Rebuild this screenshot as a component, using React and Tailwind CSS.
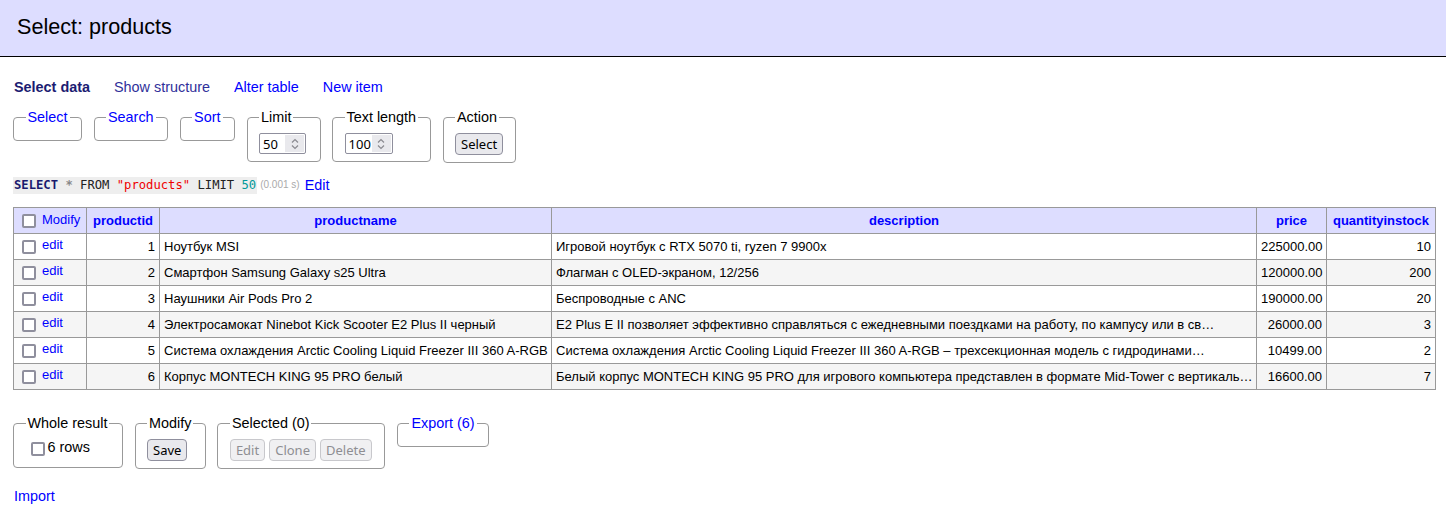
import React from 'react'

const rows = [
  { id: 1, name: 'Ноутбук MSI', desc: 'Игровой ноутбук с RTX 5070 ti, ryzen 7 9900x', price: '225000.00', qty: 10 },
  { id: 2, name: 'Смартфон Samsung Galaxy s25 Ultra', desc: 'Флагман с OLED-экраном, 12/256', price: '120000.00', qty: 200 },
  { id: 3, name: 'Наушники Air Pods Pro 2', desc: 'Беспроводные с ANC', price: '190000.00', qty: 20 },
  { id: 4, name: 'Электросамокат Ninebot Kick Scooter E2 Plus II черный', desc: 'E2 Plus E II позволяет эффективно справляться с ежедневными поездками на работу, по кампусу или в св…', price: '26000.00', qty: 3 },
  { id: 5, name: 'Система охлаждения Arctic Cooling Liquid Freezer III 360 A-RGB', desc: 'Система охлаждения Arctic Cooling Liquid Freezer III 360 A-RGB – трехсекционная модель с гидродинами…', price: '10499.00', qty: 2 },
  { id: 6, name: 'Корпус MONTECH KING 95 PRO белый', desc: 'Белый корпус MONTECH KING 95 PRO для игрового компьютера представлен в формате Mid-Tower с вертикаль…', price: '16600.00', qty: 7 },
]

const sysFont = "font-['Noto_Sans',sans-serif]"

function Box() {
  return <span className="inline-block h-[14px] w-[14px] shrink-0 rounded-[2px] border-2 border-[#8f8f9d] bg-white align-middle" />
}

function Field({ legend, link, children, className }) {
  return (
    <fieldset className={'shrink-0 rounded-[4px] border border-[#999] px-[11.5px] pb-[7px] pt-[7px] ' + (className || '')}>
      <legend className={'whitespace-nowrap px-[2px] leading-[18px] ' + (link ? 'text-[#00f]' : 'text-black')}>{legend}</legend>
      {children}
    </fieldset>
  )
}

function NumInput({ value, w }) {
  return (
    <div className={'flex h-[21px] items-stretch rounded-[2px] border border-[#8f8f9d] bg-white ' + w}>
      <div className={'flex flex-1 items-center pl-[3px] text-[13px] text-black ' + sysFont}>{value}</div>
      <div className="my-[1px] mr-[1px] flex w-[19px] items-center justify-center bg-[#e9e9ed]">
        <svg width="10" height="14" viewBox="0 0 10 14" fill="none" stroke="#8a8a90" strokeWidth="1.2">
          <path d="M2 5.5 L5 2.5 L8 5.5" />
          <path d="M2 8.5 L5 11.5 L8 8.5" />
        </svg>
      </div>
    </div>
  )
}

function Btn({ children, disabled }) {
  return (
    <span className={'inline-flex h-[22px] items-center rounded-[4px] border px-[5px] text-[13px] ' + sysFont + ' ' + (disabled ? 'border-[#c8c8cc] bg-[#f0f0f2] text-[#8e8e92]' : 'border-[#8f8f9d] bg-[#e9e9ed] text-black')}>
      {children}
    </span>
  )
}

const th = 'border border-[#999] px-[4px] font-bold text-[#00f]'
const td = 'border border-[#999] px-[4px]'

export default function App() {
  return (
    <div className="min-h-[507px] bg-white font-['Liberation_Sans',Arial,sans-serif] text-[14.4px] leading-[18px] text-black">
      <div className="flex h-[57px] items-center border-b border-black bg-[#ddf] pl-[17px] pb-[3px] text-[21.6px]">Select: products</div>

      <div className="pl-[13px]">
        <div className="mt-[21px] flex gap-[24px] pl-[1px]">
          <span className="font-bold text-[#1c1c72]">Select data</span>
          <span className="text-[#30309a]">Show structure</span>
          <span className="text-[#00f]">Alter table</span>
          <span className="text-[#00f]">New item</span>
        </div>

        <div className="mt-[12px] flex items-start gap-[11.5px]">
          <Field legend="Select" link className="w-[69px]" />
          <Field legend="Search" link className="w-[73px]" />
          <Field legend="Sort" link className="w-[53px]" />
          <Field legend="Limit" className="w-[74px]"><NumInput value="50" w="w-[47px]" /></Field>
          <Field legend="Text length" className="w-[99px]"><NumInput value="100" w="w-[48px]" /></Field>
          <Field legend="Action" className="w-[72px]"><Btn>Select</Btn></Field>
        </div>

        <div className="mt-[13px] flex items-center">
          <code className="bg-[#eee] px-[1px] py-[1px] font-['DejaVu_Sans_Mono',monospace] text-[12.2px] leading-[15px] text-[#222]">
            <span className="font-bold text-[#1a1a6e]">SELECT</span> <span className="font-bold text-[#888]">*</span> FROM <span className="text-[#e00]">"products"</span> LIMIT <span className="text-[#099]">50</span>
          </code>
          <span className="ml-[3px] text-[10px] text-[#aaa]">(0.001 s)</span>
          <span className="ml-[5px] text-[#00f]">Edit</span>
        </div>

        <table className="mt-[13px] w-[1422px] table-fixed border-collapse text-[13px] leading-[16px]">
          <colgroup>
            <col className="w-[73px]" />
            <col className="w-[73px]" />
            <col className="w-[392px]" />
            <col className="w-[705px]" />
            <col className="w-[70px]" />
            <col className="w-[109px]" />
          </colgroup>
          <thead>
            <tr className="h-[26px] bg-[#ddf]">
              <td className="border border-[#999] px-[8px]">
                <div className="flex items-center gap-[6px] text-[#00f]"><Box /><span className="-mt-[2px]">Modify</span></div>
              </td>
              <th className={th}>productid</th>
              <th className={th}>productname</th>
              <th className={th}>description</th>
              <th className={th}>price</th>
              <th className={th}>quantityinstock</th>
            </tr>
          </thead>
          <tbody>
            {rows.map((r, i) => (
              <tr key={r.id} className={'h-[26px] ' + (i % 2 ? 'bg-[#f5f5f5]' : 'bg-white')}>
                <td className="border border-[#999] px-[8px]">
                  <div className="flex items-center gap-[6px] text-[#00f]"><Box /><span className="-mt-[3px]">edit</span></div>
                </td>
                <td className={td + ' text-right'}>{r.id}</td>
                <td className={td + ' overflow-hidden whitespace-nowrap'}>{r.name}</td>
                <td className={td + ' overflow-hidden whitespace-nowrap'}>{r.desc}</td>
                <td className={td + ' text-right'}>{r.price}</td>
                <td className={td + ' text-right'}>{r.qty}</td>
              </tr>
            ))}
          </tbody>
        </table>

        <div className="mt-[24px] flex items-start gap-[11.5px]">
          <Field legend="Whole result" className="w-[110px]">
            <div className="flex items-center gap-[3px] pb-[4px] pl-[5px] pt-[3px]"><Box /><span className="-mt-[4px]">6 rows</span></div>
          </Field>
          <Field legend="Modify" className="w-[71px]"><Btn>Save</Btn></Field>
          <Field legend="Selected (0)" className="w-[168px]">
            <div className="flex gap-[4px]"><Btn disabled>Edit</Btn><Btn disabled>Clone</Btn><Btn disabled>Delete</Btn></div>
          </Field>
          <Field legend="Export (6)" link className="w-[92px]" />
        </div>

        <div className="mt-[18px] pl-[1px] text-[#00f]">Import</div>
      </div>
    </div>
  )
}
